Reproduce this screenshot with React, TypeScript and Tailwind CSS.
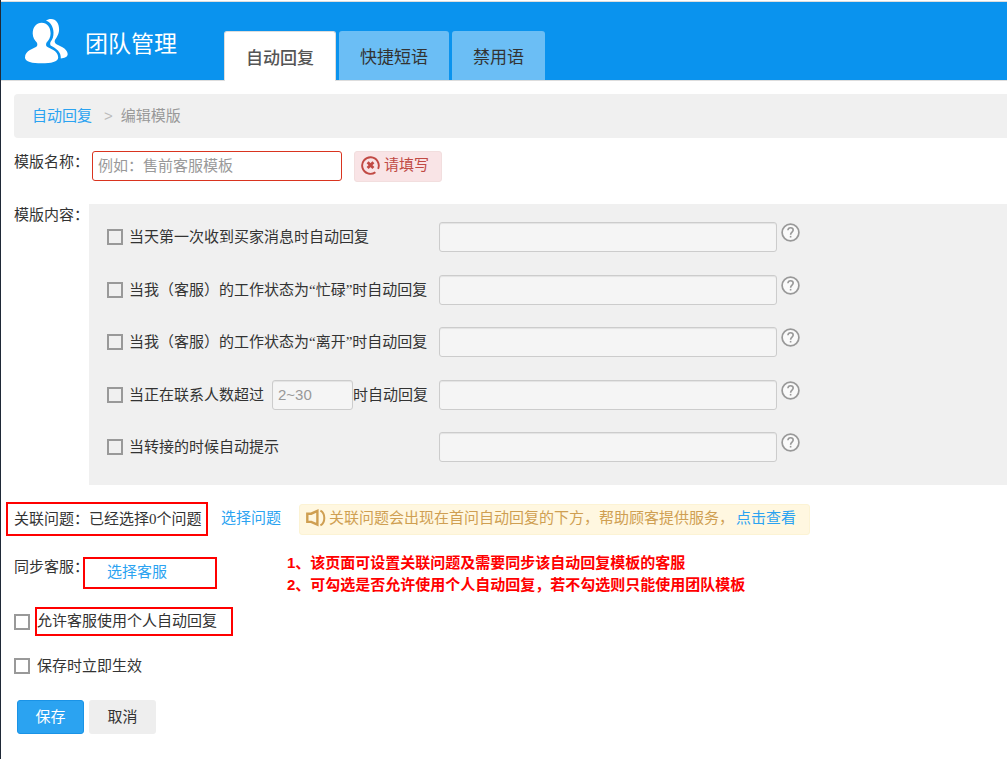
import type { ReactNode } from 'react';

const sans = "font-['Liberation_Sans','Noto_Sans_CJK_SC',sans-serif]";

function TeamLogo() {
  return (
    <svg width="44" height="45" viewBox="0 0 44 45" fill="#fff" aria-hidden="true">
      <path d="M17.7 3.7C23 3.7 26.6 8 26.6 14.4C26.6 18.6 24.6 21.2 22.6 23.6C21.9 24.6 21.8 26.8 22.8 27.6C25 29.4 34.2 31.6 34.2 38.4C34.2 42.8 27 44.2 17.7 44.2C8.4 44.2 1 42.8 1 38.4C1 31.6 10.4 29.4 12.6 27.6C13.6 26.8 13.5 24.6 12.8 23.6C10.8 21.2 8.7 18.6 8.7 14.4C8.7 8 12.4 3.7 17.7 3.7Z" />
      <path d="M22 1.8C23.2 .6 25.2 0 27 0C32.2 0 35.1 4.6 35.1 10.2C35.1 15.2 32.8 18 31.2 20.6C30.3 22.2 30.6 23.8 31.8 24.8C34 26.4 43.6 29.2 43.7 35C43.7 38 40.2 39.2 36.8 39.4C37 33 33 30.2 26.6 26.6C26 25.4 26 23.6 26.8 22.6C28.6 20.2 29.6 17.6 29.5 13.4C29.4 8 26.6 3 22 1.8Z" />
    </svg>
  );
}

function HelpIcon() {
  return (
    <svg width="19" height="19" viewBox="0 0 19 19" fill="none" stroke="#999" aria-hidden="true">
      <circle cx="9.5" cy="9.5" r="8.4" fill="#fafafa" strokeWidth="1.7" />
      <path d="M6.9 7.3C7 5.6 8 4.7 9.6 4.7C11.2 4.7 12.2 5.7 12.2 7.1C12.2 9 9.6 9.2 9.6 11.7" strokeWidth="1.6" />
      <path d="M9.6 12.9V14.5" strokeWidth="1.6" />
    </svg>
  );
}

function ErrorIcon() {
  return (
    <svg width="19" height="19" viewBox="0 0 19 19" fill="none" stroke="#c14a44" aria-hidden="true">
      <path d="M14.4 16.2A8.3 8.3 0 1 1 17.1 12.8" strokeWidth="1.9" />
      <path d="M6.6 6.2L12.4 12M12.4 6.2L6.6 12" strokeWidth="2.8" />
    </svg>
  );
}

function SpeakerIcon() {
  return (
    <svg width="20" height="18" viewBox="0 0 20 18" fill="none" stroke="#cf9f52" aria-hidden="true">
      <path d="M1.3 4.7H5.2L11.4 1.9V15.7L5.2 12.9H1.3Z" strokeWidth="2.4" />
      <path d="M14.4 1.6C19.6 4.2 19.6 13.8 14.4 16.4" strokeWidth="2" />
    </svg>
  );
}

function Check({ id }: { id: string }) {
  return (
    <input
      id={id}
      type="checkbox"
      className="size-4 shrink-0 appearance-none border-2 border-[#999] bg-transparent checked:bg-[#2ba3f1]"
    />
  );
}

const field =
  'h-[30px] rounded-[3px] border border-[#ccc] bg-[#f5f5f5] px-[5px] text-[15px] shadow-[inset_0_1px_1px_rgba(0,0,0,0.075)] outline-none placeholder:text-[#999]';

function RuleRow({ id, label, children }: { id: string; label: string; children?: ReactNode }) {
  return (
    <div className="flex items-start">
      <div className="flex h-[30px] w-[332px] shrink-0 items-center">
        <Check id={id} />
        <label htmlFor={id} className="ml-1.5 whitespace-nowrap">
          {label}
        </label>
        {children}
      </div>
      <input type="text" aria-label={label} className={`${field} ${sans} w-[338px]`} />
      <button type="button" aria-label="帮助" className="mt-px ml-1">
        <HelpIcon />
      </button>
    </div>
  );
}

export default function App() {
  return (
    <div className="min-h-screen overflow-x-hidden border-l border-[#1f2937] bg-white pt-px font-['Liberation_Serif','Noto_Sans_CJK_SC',sans-serif] text-[15px] leading-[22px] text-[#333]">
      <header className="flex h-20 items-end border-t border-b border-[#ddd] bg-[#0a93ee]">
        <div className="flex h-full w-[223px] shrink-0 items-center pl-[23px]">
          <TeamLogo />
          <h1 className="ml-[17px] pt-2 text-[23px] leading-[30px] text-white">团队管理</h1>
        </div>
        <nav className="-mb-px flex items-end gap-[3px] text-[17px]">
          <a
            href="#auto"
            className="flex h-[50px] items-center rounded-t-[3px] border border-b-0 border-[#ddd] bg-white px-[21px] pt-1 font-medium text-[#555]"
          >
            自动回复
          </a>
          <a
            href="#phrases"
            className="mb-px flex h-[49px] items-center rounded-t-[3px] bg-[#6bbef5] px-[21px] pt-1 text-[#333]"
          >
            快捷短语
          </a>
          <a
            href="#banned"
            className="mb-px flex h-[49px] items-center rounded-t-[3px] bg-[#6bbef5] px-[21px] pt-1 text-[#333]"
          >
            禁用语
          </a>
        </nav>
      </header>

      <main className="pt-[13px] pl-[13px]">
        <nav className="flex h-11 items-center rounded-l-[4px] bg-[#f0f0f0] pl-[18px] text-[#999]">
          <a href="#auto" className="text-[#2ba3f1]">
            自动回复
          </a>
          <span className={`${sans} mr-2 ml-3 text-[#bbb]`}>&gt;</span>
          <span>编辑模版</span>
        </nav>

        <form onSubmit={(e) => e.preventDefault()}>
          <div className="mt-[13px] flex items-start">
            <label htmlFor="name" className="w-[78px] shrink-0">
              模版名称：
            </label>
            <input
              id="name"
              type="text"
              placeholder="例如：售前客服模板"
              className={`${sans} h-[30px] w-[250px] rounded-[3px] border border-[#d9341f] px-[5px] pb-0.5 text-[15px] outline-none placeholder:text-[#999]`}
            />
            <p className="ml-3 flex h-[31px] w-[88px] items-center rounded-[3px] border border-[#f2dede] bg-[#f9e4e6] pb-[3px] pl-1.5 text-[#c14a44]">
              <ErrorIcon />
              <span className="ml-1">请填写</span>
            </p>
          </div>

          <div className="mt-[22px] flex">
            <span className="w-[75px] shrink-0">模版内容：</span>
            <div className="flex min-h-[281px] grow flex-col justify-between bg-[#f0f0f0] pt-[18px] pb-[23px] pl-[18px]">
              <RuleRow id="first" label="当天第一次收到买家消息时自动回复" />
              <RuleRow id="busy" label="当我（客服）的工作状态为“忙碌”时自动回复" />
              <RuleRow id="away" label="当我（客服）的工作状态为“离开”时自动回复" />
              <RuleRow id="over" label="当正在联系人数超过">
                <input
                  type="text"
                  aria-label="联系人数"
                  placeholder="2~30"
                  className={`${field} ${sans} ml-2 w-[81px]`}
                />
                <span className="whitespace-nowrap">时自动回复</span>
              </RuleRow>
              <RuleRow id="transfer" label="当转接的时候自动提示" />
            </div>
          </div>

          <div className="-ml-2 flex items-center pt-[17px]">
            <p className="flex h-[34px] w-[202px] shrink-0 items-center border-2 border-[#f00] pl-1.5 whitespace-nowrap">
              关联问题：已经选择0个问题
            </p>
            <a href="#questions" className="ml-[13px] shrink-0 pb-0.5 text-[#2ba3f1]">
              选择问题
            </a>
            <p className="ml-[18px] flex h-[31px] shrink-0 items-center rounded-[3px] border border-[#fcf3d4] bg-[#fff7e0] pr-[13px] pb-[3px] pl-1.5 text-[#cf9f52]">
              <SpeakerIcon />
              <span className="ml-[3px]">关联问题会出现在首问自动回复的下方，帮助顾客提供服务，</span>
              <a href="#view" className="ml-0.5 text-[#2ba3f1]">
                点击查看
              </a>
            </p>
          </div>

          <div className="mt-4 flex items-start">
            <span className="mt-1 w-[69px] shrink-0 whitespace-nowrap">同步客服：</span>
            <div className="mt-[5px] flex h-8 w-[134px] shrink-0 items-center border-2 border-[#f00] pb-0.5 pl-[22px]">
              <a href="#agents" className="text-[#2ba3f1]">
                选择客服
              </a>
            </div>
            <ol className={`${sans} ml-[70px] font-bold text-[#f00]`}>
              <li>1、该页面可设置关联问题及需要同步该自动回复模板的客服</li>
              <li>2、可勾选是否允许使用个人自动回复，若不勾选则只能使用团队模板</li>
            </ol>
          </div>

          <div className="mt-[11px] flex items-center">
            <Check id="personal" />
            <label
              htmlFor="personal"
              className="ml-[5px] flex h-[29px] w-[198px] items-center border-2 border-[#f00] pb-0.5"
            >
              允许客服使用个人自动回复
            </label>
          </div>

          <div className="mt-[19px] flex items-center">
            <Check id="instant" />
            <label htmlFor="instant" className="ml-[7px]">
              保存时立即生效
            </label>
          </div>

          <div className="mt-[23px] ml-[3px] flex gap-[5px]">
            <button
              type="submit"
              className="h-[34px] w-[67px] rounded-[3px] border border-[#1a93e6] bg-[#2ba3f1] text-white"
            >
              保存
            </button>
            <button type="button" className="h-[34px] w-[67px] rounded-[3px] bg-[#eee] text-[#333]">
              取消
            </button>
          </div>
        </form>
      </main>
    </div>
  );
}
